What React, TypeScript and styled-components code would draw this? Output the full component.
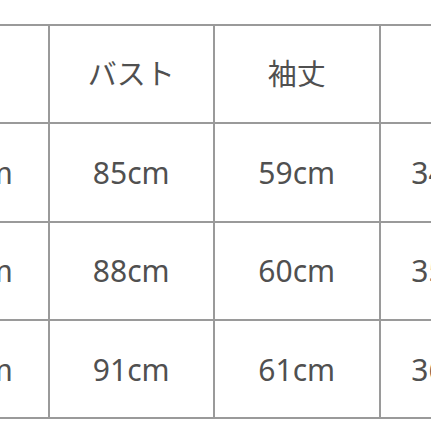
import React from "react";
import styled, { createGlobalStyle } from "styled-components";

const GlobalStyle = createGlobalStyle`
  html, body {
    margin: 0;
    padding: 0;
    background: #ffffff;
    overflow: hidden;
    width: 431px;
    height: 431px;
  }
`;

const Page = styled.div`
  width: 431px;
  height: 431px;
  overflow: hidden;
  background: #ffffff;
  padding-top: 24px;
  box-sizing: border-box;
`;

const SizeTable = styled.div`
  display: grid;
  grid-template-columns: repeat(4, 163.5px);
  grid-auto-rows: 96.3px;
  gap: 2px;
  padding: 2px;
  background: #9a9a9a;
  width: max-content;
  margin-left: -118px;
`;

const Cell = styled.div<{ $head?: boolean }>`
  background: #ffffff;
  display: flex;
  align-items: center;
  justify-content: center;
  white-space: nowrap;
  color: #505050;
  font-family: "Noto Sans", "Noto Sans CJK JP", sans-serif;
  font-size: ${(p) => (p.$head ? "29px" : "30px")};
  padding-bottom: ${(p) => (p.$head ? "4px" : "0")};
  box-sizing: border-box;
`;

const headers = ["", "バスト", "袖丈", ""];
const rows = [
  ["100cm", "85cm", "59cm", "34.5cm"],
  ["100cm", "88cm", "60cm", "35.5cm"],
  ["100cm", "91cm", "61cm", "36.5cm"],
];

export default function App() {
  return (
    <Page>
      <GlobalStyle />
      <SizeTable>
        {headers.map((h, j) => (
          <Cell key={`h-${j}`} $head>
            {h}
          </Cell>
        ))}
        {rows.map((r, i) =>
          r.map((v, j) => <Cell key={`${i}-${j}`}>{v}</Cell>)
        )}
      </SizeTable>
    </Page>
  );
}
